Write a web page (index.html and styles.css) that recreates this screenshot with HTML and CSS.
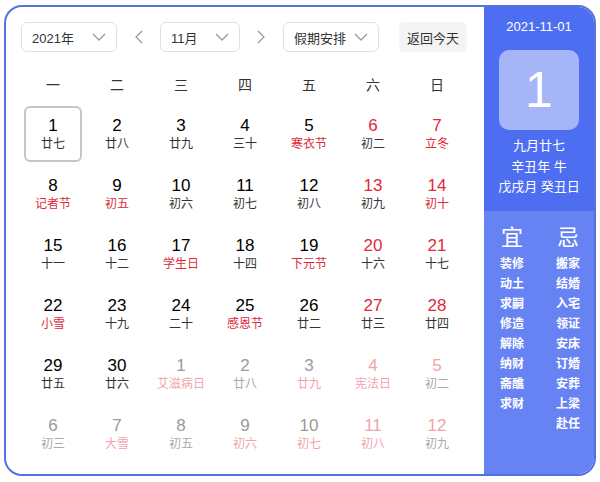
FILE: index.html
```html
<!DOCTYPE html>
<html lang="zh-CN">
<head>
<meta charset="utf-8">
<title>万年历</title>
<link rel="stylesheet" href="styles.css">
</head>
<body>
<div class="cal">
  <div class="main">
    <div class="toolbar">
      <div class="select w96"><span>2021年</span><svg class="chev" viewBox="0 0 14 8"><path d="M1 1 L7 7 L13 1" /></svg></div>
      <div class="arrow"><svg viewBox="0 0 9 14"><path d="M8 1 L2 7 L8 13" /></svg></div>
      <div class="select w80"><span>11月</span><svg class="chev" viewBox="0 0 14 8"><path d="M1 1 L7 7 L13 1" /></svg></div>
      <div class="arrow"><svg viewBox="0 0 9 14"><path d="M1 1 L7 7 L1 13" /></svg></div>
      <div class="select w96"><span>假期安排</span><svg class="chev" viewBox="0 0 14 8"><path d="M1 1 L7 7 L13 1" /></svg></div>
      <div class="today">返回今天</div>
    </div>
    <div class="weekdays">
      <div>一</div><div>二</div><div>三</div><div>四</div><div>五</div><div>六</div><div>日</div>
    </div>
    <div class="grid">
      <div class="day sel"><span class="num">1</span><span class="lun">廿七</span></div>
      <div class="day"><span class="num">2</span><span class="lun">廿八</span></div>
      <div class="day"><span class="num">3</span><span class="lun">廿九</span></div>
      <div class="day"><span class="num">4</span><span class="lun">三十</span></div>
      <div class="day rl"><span class="num">5</span><span class="lun">寒衣节</span></div>
      <div class="day rn"><span class="num">6</span><span class="lun">初二</span></div>
      <div class="day rn rl"><span class="num">7</span><span class="lun">立冬</span></div>

      <div class="day rl"><span class="num">8</span><span class="lun">记者节</span></div>
      <div class="day rl"><span class="num">9</span><span class="lun">初五</span></div>
      <div class="day"><span class="num">10</span><span class="lun">初六</span></div>
      <div class="day"><span class="num">11</span><span class="lun">初七</span></div>
      <div class="day"><span class="num">12</span><span class="lun">初八</span></div>
      <div class="day rn"><span class="num">13</span><span class="lun">初九</span></div>
      <div class="day rn rl"><span class="num">14</span><span class="lun">初十</span></div>

      <div class="day"><span class="num">15</span><span class="lun">十一</span></div>
      <div class="day"><span class="num">16</span><span class="lun">十二</span></div>
      <div class="day rl"><span class="num">17</span><span class="lun">学生日</span></div>
      <div class="day"><span class="num">18</span><span class="lun">十四</span></div>
      <div class="day rl"><span class="num">19</span><span class="lun">下元节</span></div>
      <div class="day rn"><span class="num">20</span><span class="lun">十六</span></div>
      <div class="day rn"><span class="num">21</span><span class="lun">十七</span></div>

      <div class="day rl"><span class="num">22</span><span class="lun">小雪</span></div>
      <div class="day"><span class="num">23</span><span class="lun">十九</span></div>
      <div class="day"><span class="num">24</span><span class="lun">二十</span></div>
      <div class="day rl"><span class="num">25</span><span class="lun">感恩节</span></div>
      <div class="day"><span class="num">26</span><span class="lun">廿二</span></div>
      <div class="day rn"><span class="num">27</span><span class="lun">廿三</span></div>
      <div class="day rn"><span class="num">28</span><span class="lun">廿四</span></div>

      <div class="day"><span class="num">29</span><span class="lun">廿五</span></div>
      <div class="day"><span class="num">30</span><span class="lun">廿六</span></div>
      <div class="day other rl"><span class="num">1</span><span class="lun">艾滋病日</span></div>
      <div class="day other"><span class="num">2</span><span class="lun">廿八</span></div>
      <div class="day other rl"><span class="num">3</span><span class="lun">廿九</span></div>
      <div class="day other rn rl"><span class="num">4</span><span class="lun">宪法日</span></div>
      <div class="day other rn"><span class="num">5</span><span class="lun">初二</span></div>

      <div class="day other"><span class="num">6</span><span class="lun">初三</span></div>
      <div class="day other rl"><span class="num">7</span><span class="lun">大雪</span></div>
      <div class="day other"><span class="num">8</span><span class="lun">初五</span></div>
      <div class="day other rl"><span class="num">9</span><span class="lun">初六</span></div>
      <div class="day other rl"><span class="num">10</span><span class="lun">初七</span></div>
      <div class="day other rn rl"><span class="num">11</span><span class="lun">初八</span></div>
      <div class="day other rn"><span class="num">12</span><span class="lun">初九</span></div>
    </div>
  </div>
  <div class="side">
    <div class="side-top">
      <div class="date">2021-11-01</div>
      <div class="big">1</div>
      <div class="lunar">
        <div>九月廿七</div>
        <div>辛丑年 牛</div>
        <div>戊戌月 癸丑日</div>
      </div>
    </div>
    <div class="side-bottom">
      <div class="col">
        <div class="head">宜</div>
        <div>装修</div><div>动土</div><div>求嗣</div><div>修造</div><div>解除</div><div>纳财</div><div>斋醮</div><div>求财</div>
      </div>
      <div class="col">
        <div class="head">忌</div>
        <div>搬家</div><div>结婚</div><div>入宅</div><div>领证</div><div>安床</div><div>订婚</div><div>安葬</div><div>上梁</div><div>赴任</div>
      </div>
    </div>
  </div>
</div>
</body>
</html>
```

FILE: styles.css
```css
* { box-sizing: border-box; }
html, body { margin: 0; padding: 0; background: #fff; }
body {
  font-family: "Liberation Sans", "Noto Sans CJK SC", sans-serif;
  color: #333;
}
.cal {
  margin: 5px 0 0 4px;
  width: 592px;
  height: 471px;
  border: 2px solid #5673dc;
  border-radius: 18px;
  overflow: hidden;
  display: flex;
  background: #fff;
}
.main {
  width: 478px;
  padding: 15px 0 0 15px;
}
.toolbar {
  display: flex;
  align-items: center;
  height: 30px;
}
.select {
  height: 30px;
  border: 1px solid #dcdfe6;
  border-radius: 6px;
  display: flex;
  align-items: center;
  justify-content: space-between;
  padding: 0 10px 0 10px;
  font-size: 13px;
  color: #333;
}
.w96 { width: 96px; }
.w80 { width: 80px; }
.chev { width: 14px; height: 8px; }
.chev path, .arrow path {
  fill: none;
  stroke: #999;
  stroke-width: 1.3;
}
.arrow {
  width: 43px;
  display: flex;
  justify-content: center;
}
.arrow svg { width: 9px; height: 14px; }
.today {
  margin-left: 20px;
  width: 68px;
  height: 30px;
  background: #f4f4f5;
  border-radius: 5px;
  display: flex;
  align-items: center;
  justify-content: center;
  font-size: 13px;
  color: #333;
}
.weekdays {
  margin-top: 12px;
  display: grid;
  grid-template-columns: repeat(7, 64px);
  height: 40px;
  align-items: center;
  font-size: 14px;
  color: #333;
  text-align: center;
}
.grid {
  display: grid;
  grid-template-columns: repeat(7, 64px);
  grid-auto-rows: 60px;
}
.day {
  margin: 2px 3px;
  border: 2px solid transparent;
  border-radius: 6px;
  display: flex;
  flex-direction: column;
  align-items: center;
  justify-content: center;
  padding-bottom: 1px;
}
.day.sel { border-color: #c4c6cc; }
.num {
  font-size: 17px;
  line-height: 20px;
  color: #000;
}
.lun {
  font-size: 12px;
  line-height: 16px;
  color: #333;
  white-space: nowrap;
}
.rn .num { color: #e02a3a; }
.rl .lun { color: #e02a3a; }
.other .num { color: #9a9a9a; }
.other .lun { color: #aaa; }
.other.rn .num { color: #f1a3ab; }
.other.rl .lun { color: #f1a3ab; }

.side {
  width: 110px;
  display: flex;
  flex-direction: column;
  color: #fff;
}
.side-top {
  height: 204px;
  background: #4e6ef2;
  display: flex;
  flex-direction: column;
  align-items: center;
  padding-top: 11px;
}
.date {
  font-size: 13px;
  line-height: 18px;
}
.big {
  margin-top: 14px;
  width: 80px;
  height: 80px;
  border-radius: 10px;
  background: #a5b5f8;
  display: flex;
  align-items: center;
  justify-content: center;
  font-size: 50px;
  color: #fff;
}
.lunar {
  margin-top: 6px;
  font-size: 13px;
  line-height: 20.5px;
  text-align: center;
}
.side-bottom {
  flex: 1;
  background: #6783f3;
  display: flex;
  padding: 13px 0 0 16px;
  gap: 32px;
}
.col {
  width: 24px;
  display: flex;
  flex-direction: column;
  align-items: center;
  font-size: 12px;
  line-height: 20px;
  font-weight: bold;
}
.col .head {
  font-size: 22px;
  line-height: 28px;
  font-weight: normal;
  margin-bottom: 2px;
}
```
